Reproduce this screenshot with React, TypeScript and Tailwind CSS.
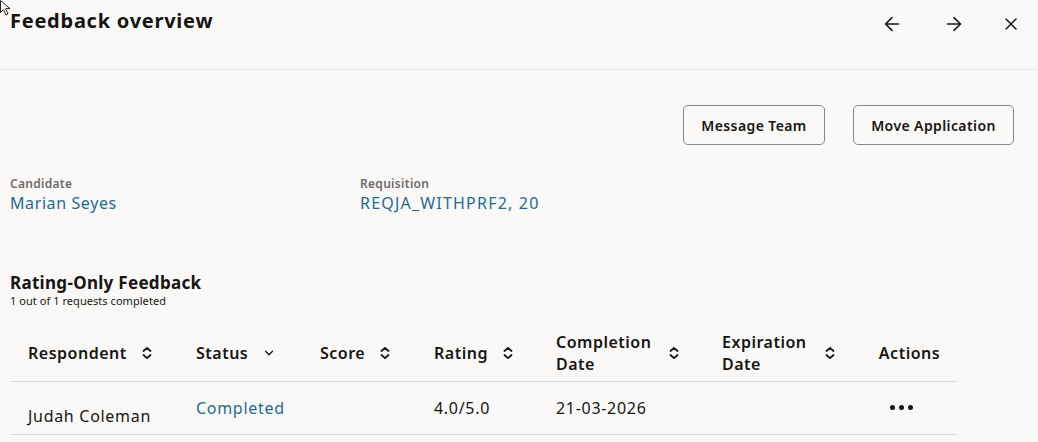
import { ArrowLeft, ArrowRight, X, ChevronDown } from 'lucide-react'

function SortIcon() {
  return (
    <svg width="12" height="14" viewBox="0 0 12 14" fill="none" stroke="#161513" strokeWidth="1.8" strokeLinecap="round" strokeLinejoin="round">
      <path d="M2.5 5L6 1.8L9.5 5" />
      <path d="M2.5 9L6 12.2L9.5 9" />
    </svg>
  )
}

type Col = { label: string[]; w: string; pad: string; icon: 'sort' | 'down' | null; center?: boolean }

const cols: Col[] = [
  { label: ['Respondent'], w: 'w-[170px]', pad: 'pl-[18px]', icon: 'sort' },
  { label: ['Status'], w: 'w-[124px]', pad: 'pl-[16px]', icon: 'down' },
  { label: ['Score'], w: 'w-[114px]', pad: 'pl-[16px]', icon: 'sort' },
  { label: ['Rating'], w: 'w-[122px]', pad: 'pl-[16px]', icon: 'sort' },
  { label: ['Completion', 'Date'], w: 'w-[166px]', pad: 'pl-[16px]', icon: 'sort' },
  { label: ['Expiration', 'Date'], w: 'w-[156px]', pad: 'pl-[16px]', icon: 'sort' },
  { label: ['Actions'], w: 'flex-1', pad: 'pl-[0px]', icon: null, center: true },
]

export default function App() {
  return (
    <div className="relative w-[1038px] h-[442px] overflow-hidden bg-[#faf9f8] text-[#161513] font-['Noto_Sans',sans-serif]">
      {/* pointer */}
      <svg className="absolute left-0 top-0" width="12" height="16" viewBox="0 0 12 16">
        <path d="M0.5 0.5L0.5 12.5L3.5 9.5L6 15L8 14L5.6 8.6L10 8.6Z" fill="#fff" stroke="#222" strokeWidth="1" />
      </svg>

      <div className="h-[70px] border-b border-[#e9e7e4] flex items-start justify-between pl-[10px] pr-[17px]">
        <h1 className="text-[20px] font-bold leading-none pt-[11px] tracking-[0.75px]">Feedback overview</h1>
        <div className="flex items-center pt-[13px]">
          <ArrowLeft size={22} strokeWidth={1.7} />
          <ArrowRight size={22} strokeWidth={1.7} className="ml-[40px]" />
          <X size={20} strokeWidth={1.8} className="ml-[36px]" />
        </div>
      </div>

      <div className="flex justify-end gap-[28px] pr-[24px] pt-[35px]">
        <button className="h-[40px] w-[142px] rounded-[5px] border border-[#8a8683] text-[14px] font-semibold tracking-[0.4px]">Message Team</button>
        <button className="h-[40px] w-[161px] rounded-[5px] border border-[#8a8683] text-[14px] font-semibold tracking-[0.4px]">Move Application</button>
      </div>

      <div className="flex pl-[10px] pt-[31px]">
        <div className="w-[350px]">
          <div className="text-[12px] font-semibold text-[#6f6a66] leading-[16px] tracking-[0.3px]">Candidate</div>
          <div className="text-[16px] text-[#1e6b91] leading-[22px] tracking-[0.6px]">Marian Seyes</div>
        </div>
        <div>
          <div className="text-[12px] font-semibold text-[#6f6a66] leading-[16px] tracking-[0.3px]">Requisition</div>
          <div className="text-[16px] text-[#1e6b91] leading-[22px] tracking-[1.2px]">REQJA_WITHPRF2, 20</div>
        </div>
      </div>

      <div className="pl-[10px] pt-[58px]">
        <div className="text-[17px] font-bold leading-[22px] tracking-[0.3px]">Rating-Only Feedback</div>
        <div className="text-[11px] leading-[14px] tracking-[0.05px]">1 out of 1 requests completed</div>
      </div>

      <div className="ml-[10px] w-[947px] mt-[17px]">
        <div className="flex h-[57px] border-b border-[#dcdad7]">
          {cols.map((c, i) => (
            <div key={i} className={`${c.w} flex items-center ${c.center ? 'justify-center' : ''} ${c.pad}`}>
              <div className="text-[16px] font-semibold leading-[22px] tracking-[0.5px]">
                {c.label.map((l) => (
                  <div key={l}>{l}</div>
                ))}
              </div>
              {c.icon === 'sort' && (
                <span className={c.label.length > 1 ? 'ml-[17px]' : 'ml-[14px]'}>
                  <SortIcon />
                </span>
              )}
              {c.icon === 'down' && <ChevronDown size={14} strokeWidth={2.2} className="ml-[14px]" />}
            </div>
          ))}
        </div>
        <div className="flex h-[53px] border-b border-[#dcdad7] text-[16px] tracking-[0.7px]">
          <div className="w-[170px] pl-[18px] pt-[22px]">Judah Coleman</div>
          <div className="w-[124px] pl-[16px] pt-[14px] text-[#1e6b91]">Completed</div>
          <div className="w-[114px]" />
          <div className="w-[122px] pl-[16px] pt-[14px]">4.0/5.0</div>
          <div className="w-[166px] pl-[16px] pt-[14px]">21-03-2026</div>
          <div className="w-[156px]" />
          <div className="flex-1 flex justify-center items-start pt-[23px] pr-[16px]">
            <div className="flex gap-[4px]">
              <span className="w-[5px] h-[5px] rounded-full bg-[#161513]" />
              <span className="w-[5px] h-[5px] rounded-full bg-[#161513]" />
              <span className="w-[5px] h-[5px] rounded-full bg-[#161513]" />
            </div>
          </div>
        </div>
      </div>
    </div>
  )
}
